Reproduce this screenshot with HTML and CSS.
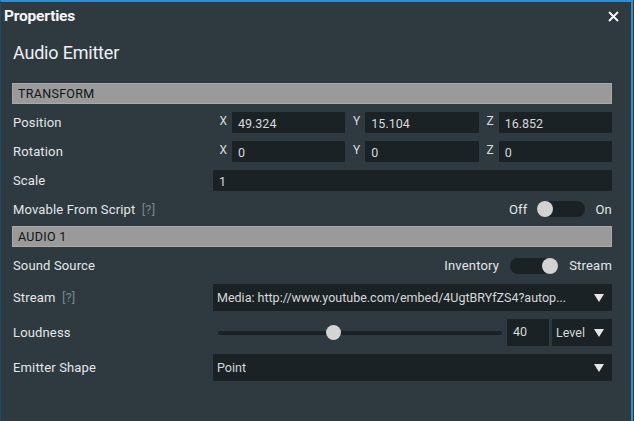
FILE: index.html
```html
<!DOCTYPE html>
<html>
<head>
<meta charset="utf-8">
<link rel="stylesheet" href="styles.css">
</head>
<body>
<div class="window">
  <div class="titlebar">
    <span class="title">Properties</span>
    <span class="close"><svg width="11" height="11" viewBox="0 0 11 11"><path d="M1 1 L10 10 M10 1 L1 10" stroke="#ffffff" stroke-width="1.8"/></svg></span>
  </div>
  <div class="content">
    <div class="heading">Audio Emitter</div>

    <div class="section">TRANSFORM</div>

    <div class="row">
      <div class="label">Position</div>
      <div class="vec3">
        <span class="axis">X</span><span class="field">49.324</span>
        <span class="axis">Y</span><span class="field">15.104</span>
        <span class="axis">Z</span><span class="field">16.852</span>
      </div>
    </div>
    <div class="row">
      <div class="label">Rotation</div>
      <div class="vec3">
        <span class="axis">X</span><span class="field">0</span>
        <span class="axis">Y</span><span class="field">0</span>
        <span class="axis">Z</span><span class="field">0</span>
      </div>
    </div>
    <div class="row">
      <div class="label">Scale</div>
      <div class="field">1</div>
    </div>
    <div class="row row-toggle">
      <div class="label">Movable From Script <span class="help">[?]</span></div>
      <div class="toggle-wrap">
        <span class="tlabel">Off</span>
        <span class="track"><span class="knob"></span></span>
        <span class="tlabel">On</span>
      </div>
    </div>

    <div class="section">AUDIO 1</div>

    <div class="row">
      <div class="label">Sound Source</div>
      <div class="toggle-wrap wide">
        <span class="tlabel">Inventory</span>
        <span class="track on"><span class="knob"></span></span>
        <span class="tlabel">Stream</span>
      </div>
    </div>
    <div class="row row-tall">
      <div class="label">Stream <span class="help">[?]</span></div>
      <div class="dropdown">
        <span class="dd-text">Media: http://www.youtube.com/embed/4UgtBRYfZS4?autop...</span>
        <svg class="tri" width="10" height="8" viewBox="0 0 10 8"><polygon points="0,0 10,0 5,8" fill="#e6e6e6"/></svg>
      </div>
    </div>
    <div class="row row-tall">
      <div class="label">Loudness</div>
      <div class="loud">
        <div class="slider">
          <div class="slider-track"><span class="thumb" style="left: 40.5%"></span></div>
        </div>
        <div class="numbox">40</div>
        <div class="dropdown level">
          <span class="dd-text">Level</span>
          <svg class="tri" width="10" height="8" viewBox="0 0 10 8"><polygon points="0,0 10,0 5,8" fill="#e6e6e6"/></svg>
        </div>
      </div>
    </div>
    <div class="row row-tall">
      <div class="label">Emitter Shape</div>
      <div class="dropdown">
        <span class="dd-text">Point</span>
        <svg class="tri" width="10" height="8" viewBox="0 0 10 8"><polygon points="0,0 10,0 5,8" fill="#e6e6e6"/></svg>
      </div>
    </div>
  </div>
</div>
</body>
</html>
```
FILE: styles.css
```css
* { box-sizing: border-box; }
html, body {
  margin: 0;
  padding: 0;
  background: #2e3a40;
}
body {
  width: 634px;
  height: 421px;
  overflow: hidden;
  font-family: Roboto, "Noto Sans", sans-serif;
  color: #e4e6e7;
}
.window {
  width: 633px;
  height: 421px;
  background: #2e3a40;
  border-top: 2px solid #2b8fd5;
  border-right: 2px solid #2b8fd5;
  border-left: 1px solid #214a62;
}
.titlebar {
  height: 28px;
  display: flex;
  align-items: center;
  justify-content: space-between;
  padding: 0 12px 0 3px;
}
.title {
  font-size: 15.5px;
  font-weight: 700;
  color: #f2f4f5;
  letter-spacing: -0.2px;
}
.close {
  display: flex;
  width: 11px;
  height: 11px;
}
.content {
  display: flex;
  flex-direction: column;
  gap: 8px;
  padding: 0 19px 0 11px;
}
.heading {
  height: 45px;
  padding: 11px 0 0 1px;
  font-size: 18px;
  line-height: 24px;
  color: #eef0f1;
  letter-spacing: -0.2px;
}
.section {
  height: 21px;
  background: #9a9a9a;
  border: 1px solid #a9a9a9;
  color: #111518;
  font-size: 12.5px;
  font-weight: 400;
  letter-spacing: 0.3px;
  line-height: 19px;
  padding-left: 5px;
}
.row {
  display: grid;
  grid-template-columns: 201px 1fr;
  height: 21px;
  align-items: center;
}
.row-toggle { height: 20px; margin-bottom: -1px; }
.row-tall { height: 27px; }
.label {
  font-size: 13px;
  padding-left: 1px;
  color: #e4e6e7;
  white-space: nowrap;
  letter-spacing: 0.15px;
}
.help { color: #7b8489; margin-left: 3px; }
.vec3 {
  display: grid;
  grid-template-columns: 19px 1fr 20px 1fr 20px 1fr;
  height: 21px;
}
.axis {
  font-size: 12px;
  text-align: right;
  padding-right: 5px;
  line-height: 18px;
  color: #d8dadb;
}
.field {
  background: #1b2226;
  height: 21px;
  font-size: 12.5px;
  line-height: 23px;
  padding-left: 6px;
  color: #d6d8d9;
  border-radius: 1px;
}
.toggle-wrap {
  display: flex;
  justify-content: flex-end;
  align-items: center;
  gap: 10px;
  font-size: 13px;
  letter-spacing: 0.2px;
}
.toggle-wrap.wide { gap: 11px; }
.tlabel { color: #e4e6e7; }
.track {
  width: 48px;
  height: 16px;
  border-radius: 8px;
  background: #1b2226;
  display: flex;
  align-items: center;
  justify-content: flex-start;
}
.track.on { justify-content: flex-end; }
.knob {
  width: 16px;
  height: 16px;
  border-radius: 50%;
  background: #d2d2d2;
}
.dropdown {
  background: #1b2226;
  height: 27px;
  display: flex;
  align-items: center;
  justify-content: space-between;
  padding: 0 8px 0 4px;
  font-size: 12.5px;
  color: #d6d8d9;
}
.dd-text { white-space: nowrap; overflow: hidden; }
.tri { flex: none; }
.loud {
  display: grid;
  grid-template-columns: 1fr 42px 60px;
  gap: 0 3px;
  height: 27px;
}
.slider {
  display: flex;
  align-items: center;
  padding: 0 2px 0 5px;
}
.slider-track {
  position: relative;
  width: 100%;
  height: 4px;
  border-radius: 2px;
  background: #1b2226;
}
.thumb {
  position: absolute;
  top: -5.5px;
  width: 15px;
  height: 15px;
  margin-left: -7.5px;
  border-radius: 50%;
  background: #d4d4d4;
}
.numbox {
  background: #1b2226;
  font-size: 12.5px;
  line-height: 25px;
  padding-left: 6px;
  color: #d6d8d9;
}
.level { padding-left: 4px; }
```
